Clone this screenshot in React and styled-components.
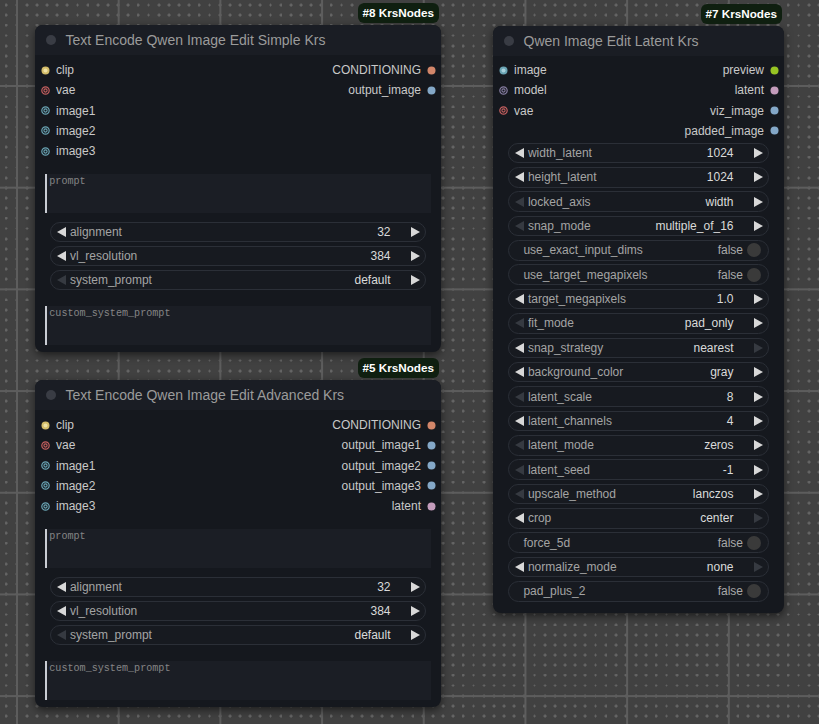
import React from "react";
import styled, { createGlobalStyle } from "styled-components";

const GlobalStyle = createGlobalStyle`
  html, body {
    margin: 0;
    padding: 0;
    background: #414141;
  }
  body {
    font-family: "Liberation Sans", Arial, sans-serif;
  }
`;

// tiny "+" marks of the canvas grid
const plusTile =
  "url(\"data:image/svg+xml,%3Csvg xmlns='http://www.w3.org/2000/svg' width='10' height='10' viewBox='0 0 10 10'%3E%3Crect x='4' y='5' width='3' height='1' fill='%236c6c6c'/%3E%3Crect x='5' y='4' width='1' height='3' fill='%236c6c6c'/%3E%3C/svg%3E\")";

const Canvas = styled.div`
  position: relative;
  width: 819px;
  height: 724px;
  overflow: hidden;
  background-color: #414141;
  background-image: linear-gradient(90deg, #5d5d5d 2px, transparent 2px),
    linear-gradient(180deg, #5d5d5d 2px, transparent 2px), ${plusTile};
  background-size: 101.7px 101.7px, 101.7px 101.7px, 10.17px 10.17px;
  background-position: 16px 0, 0 85px, 11px 9.7px;
`;

const NodeBox = styled.div`
  position: absolute;
  left: ${(p) => p.$x}px;
  top: ${(p) => p.$y}px;
  width: ${(p) => p.$w}px;
  padding-bottom: ${(p) => p.$pb}px;
  background: #15181e;
  border-radius: 8px;
  box-shadow: 0 3px 8px rgba(0, 0, 0, 0.55);
  display: flex;
  flex-direction: column;
`;

const Badge = styled.div`
  position: absolute;
  right: 2px;
  bottom: calc(100% + 2px);
  height: 20px;
  padding: 0 5px;
  border-radius: 6px;
  background: #0f1f10;
  color: #ffffff;
  font-size: 11.7px;
  font-weight: 700;
  line-height: 20px;
  white-space: nowrap;
`;

const TitleBar = styled.div`
  height: 30px;
  display: flex;
  align-items: center;
  padding-left: 10.5px;
  background: #1a1d24;
  border-radius: 8px 8px 0 0;
  color: #9b9b9b;
  font-size: 14px;
  white-space: nowrap;
`;

const TitleDot = styled.span`
  width: 10px;
  height: 10px;
  border-radius: 50%;
  background: #393c44;
  margin-right: 10px;
`;

const Slots = styled.div`
  display: flex;
  justify-content: space-between;
  padding-top: ${(p) => p.$pt}px;
`;

const SlotColumn = styled.div`
  display: flex;
  flex-direction: column;
  align-items: ${(p) => (p.$right ? "flex-end" : "flex-start")};
`;

const SlotRow = styled.div`
  height: 20.25px;
  display: flex;
  align-items: center;
  gap: ${(p) => (p.$right ? 6 : 6.5)}px;
  padding: ${(p) => (p.$right ? "0 5px 0 0" : "0 0 0 5.5px")};
  font-size: 12px;
  color: #c9c9c9;
  white-space: nowrap;
`;

const TextBox = styled.div`
  margin: ${(p) => p.$mt}px 10px 0;
  height: 39px;
  box-sizing: border-box;
  background: #1b1e25;
  border-left: 2px solid #c9ccd3;
  padding: 2px 0 0 2.3px;
  font-family: "Liberation Mono", "DejaVu Sans Mono", monospace;
  font-size: 10.1px;
  line-height: 12px;
  color: #858585;
`;

const WidgetList = styled.div`
  display: flex;
  flex-direction: column;
  gap: ${(p) => p.$gap}px;
  margin: ${(p) => p.$mt}px 15px 0;
`;

const Widget = styled.div`
  height: 20.5px;
  box-sizing: border-box;
  border: 1px solid #2b2f37;
  border-radius: 11px;
  background: #171a20;
  display: flex;
  align-items: center;
  padding: 0 5.5px 0 ${(p) => (p.$toggle ? 14.4 : 5.5)}px;
  font-size: 12px;
  white-space: nowrap;
`;

const WidgetLabel = styled.span`
  flex: 1;
  margin-left: ${(p) => (p.$toggle ? 0 : 4.4)}px;
  color: #a4a4a4;
`;

const WidgetValue = styled.span`
  color: #dadada;
  margin-right: 20px;
`;

const ToggleValue = styled.span`
  color: #a9a9a9;
  margin-right: 4px;
`;

const ToggleKnob = styled.span`
  width: 14px;
  height: 14px;
  border-radius: 50%;
  background: #3a3a3a;
  margin-right: 1.5px;
`;

const Arrow = ({ dir, dim }) => (
  <svg width="9" height="10" viewBox="0 0 9 10">
    <polygon
      points={dir === "left" ? "9,0 9,10 0,5" : "0,0 0,10 9,5"}
      fill={dim ? "#363a41" : "#d8d8d8"}
    />
  </svg>
);

const SlotDot = ({ color, hollow, inner }) => (
  <svg width="9" height="9" viewBox="0 0 9 9">
    {hollow ? (
      <>
        <circle cx="4.5" cy="4.5" r="3.7" fill="none" stroke={color} strokeWidth="1.2" />
        <circle cx="4.5" cy="4.5" r="1.6" fill="none" stroke={color} strokeWidth="1.1" />
      </>
    ) : (
      <>
        <circle cx="4.5" cy="4.5" r="4" fill={color} />
        {inner && <circle cx="4.5" cy="4.5" r="2" fill={inner} />}
      </>
    )}
  </svg>
);

const C = {
  clip: "#d4bd6a",
  clipIn: "#efe2a6",
  vae: "#c45f5f",
  image: "#6aa4b4",
  imageIn: "#a9d1dc",
  model: "#857ca0",
  cond: "#d2866a",
  outImage: "#84a8c8",
  preview: "#97c423",
  latent: "#c49cbc",
};

const NodeSlots = ({ inputs, outputs, pt }) => (
  <Slots $pt={pt}>
    <SlotColumn>
      {inputs.map((s) => (
        <SlotRow key={s.name}>
          <SlotDot color={s.color} hollow={s.hollow} inner={s.inner} />
          {s.name}
        </SlotRow>
      ))}
    </SlotColumn>
    <SlotColumn $right>
      {outputs.map((s) => (
        <SlotRow key={s.name} $right>
          {s.name}
          <SlotDot color={s.color} />
        </SlotRow>
      ))}
    </SlotColumn>
  </Slots>
);

// l / r = arrow enabled
const WidgetRow = ({ w }) => {
  if (w.toggle) {
    return (
      <Widget $toggle>
        <WidgetLabel $toggle>{w.name}</WidgetLabel>
        <ToggleValue>false</ToggleValue>
        <ToggleKnob />
      </Widget>
    );
  }
  return (
    <Widget>
      <Arrow dir="left" dim={!w.l} />
      <WidgetLabel>{w.name}</WidgetLabel>
      <WidgetValue>{w.value}</WidgetValue>
      <Arrow dir="right" dim={!w.r} />
    </Widget>
  );
};

const textEncodeInputs = [
  { name: "clip", color: C.clip, inner: C.clipIn },
  { name: "vae", color: C.vae, hollow: true },
  { name: "image1", color: C.image, hollow: true },
  { name: "image2", color: C.image, hollow: true },
  { name: "image3", color: C.image, hollow: true },
];

const textEncodeWidgets = [
  { name: "alignment", value: "32", l: true, r: true },
  { name: "vl_resolution", value: "384", l: true, r: true },
  { name: "system_prompt", value: "default", l: false, r: true },
];

const latentWidgets = [
  { name: "width_latent", value: "1024", l: true, r: true },
  { name: "height_latent", value: "1024", l: true, r: true },
  { name: "locked_axis", value: "width", l: false, r: true },
  { name: "snap_mode", value: "multiple_of_16", l: false, r: true },
  { name: "use_exact_input_dims", toggle: true },
  { name: "use_target_megapixels", toggle: true },
  { name: "target_megapixels", value: "1.0", l: true, r: true },
  { name: "fit_mode", value: "pad_only", l: false, r: true },
  { name: "snap_strategy", value: "nearest", l: true, r: false },
  { name: "background_color", value: "gray", l: true, r: true },
  { name: "latent_scale", value: "8", l: false, r: true },
  { name: "latent_channels", value: "4", l: true, r: true },
  { name: "latent_mode", value: "zeros", l: false, r: true },
  { name: "latent_seed", value: "-1", l: false, r: true },
  { name: "upscale_method", value: "lanczos", l: false, r: true },
  { name: "crop", value: "center", l: true, r: false },
  { name: "force_5d", toggle: true },
  { name: "normalize_mode", value: "none", l: true, r: false },
  { name: "pad_plus_2", toggle: true },
];

const TextEncodeNode = ({ x, y, id, title, outputs }) => (
  <NodeBox $x={x} $y={y} $w={406} $pb={7}>
    <Badge>#{id} KrsNodes</Badge>
    <TitleBar>
      <TitleDot />
      {title}
    </TitleBar>
    <NodeSlots inputs={textEncodeInputs} outputs={outputs} pt={5} />
    <TextBox $mt={12.75}>prompt</TextBox>
    <WidgetList $gap={3.5} $mt={8.7}>
      {textEncodeWidgets.map((w) => (
        <WidgetRow key={w.name} w={w} />
      ))}
    </WidgetList>
    <TextBox $mt={15.8}>custom_system_prompt</TextBox>
  </NodeBox>
);

const App = () => {
  return (
    <>
      <GlobalStyle />
      <Canvas>
        <TextEncodeNode
          x={35}
          y={25}
          id={8}
          title="Text Encode Qwen Image Edit Simple Krs"
          outputs={[
            { name: "CONDITIONING", color: C.cond },
            { name: "output_image", color: C.outImage },
          ]}
        />
        <TextEncodeNode
          x={35}
          y={380}
          id={5}
          title="Text Encode Qwen Image Edit Advanced Krs"
          outputs={[
            { name: "CONDITIONING", color: C.cond },
            { name: "output_image1", color: C.outImage },
            { name: "output_image2", color: C.outImage },
            { name: "output_image3", color: C.outImage },
            { name: "latent", color: C.latent },
          ]}
        />
        <NodeBox $x={493} $y={26} $w={291} $pb={11.1}>
          <Badge>#7 KrsNodes</Badge>
          <TitleBar>
            <TitleDot />
            Qwen Image Edit Latent Krs
          </TitleBar>
          <NodeSlots
            pt={4}
            inputs={[
              { name: "image", color: C.image, inner: C.imageIn },
              { name: "model", color: C.model, hollow: true },
              { name: "vae", color: C.vae, hollow: true },
            ]}
            outputs={[
              { name: "preview", color: C.preview },
              { name: "latent", color: C.latent },
              { name: "viz_image", color: C.outImage },
              { name: "padded_image", color: C.outImage },
            ]}
          />
          <WidgetList $gap={3.87} $mt={1.7}>
            {latentWidgets.map((w) => (
              <WidgetRow key={w.name} w={w} />
            ))}
          </WidgetList>
        </NodeBox>
      </Canvas>
    </>
  );
};

export default App;
